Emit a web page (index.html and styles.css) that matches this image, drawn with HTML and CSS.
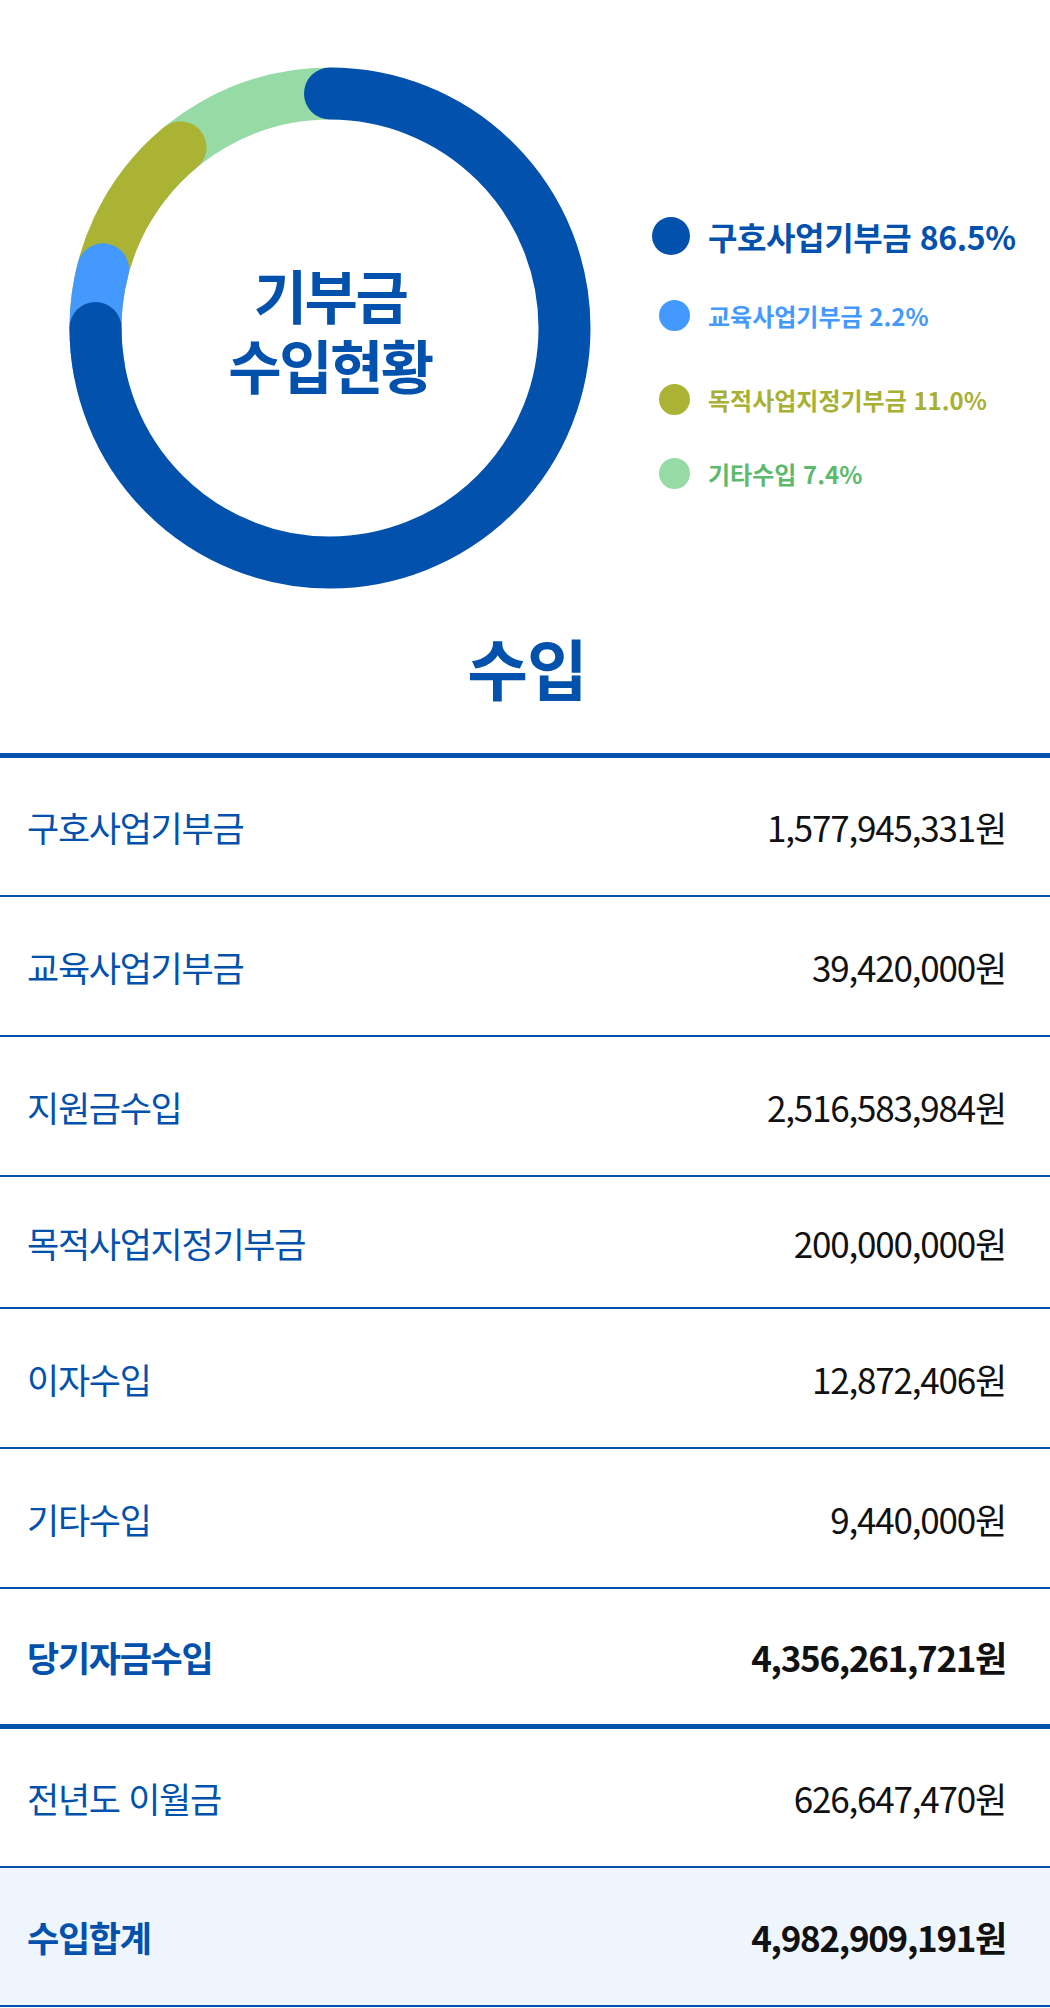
FILE: index.html
```html
<!DOCTYPE html>
<html lang="ko">
<head>
<meta charset="utf-8">
<title>기부금 수입현황</title>
<link rel="stylesheet" href="styles.css">
</head>
<body>
<section class="chart-section">
  <div class="donut">
    <svg class="donut-svg" viewBox="0 0 522 522" width="522" height="522">
      <path class="seg seg-green" d="M57.9 143.75 A234.5 234.5 0 0 1 261 26.5"/>
      <path class="seg seg-olive" d="M26.5 261 A234.5 234.5 0 0 1 111.5 80.3"/>
      <path class="seg seg-light" d="M30.1 301.7 A234.5 234.5 0 0 1 34.0 202.3"/>
      <path class="seg seg-dark" d="M261 26.5 A234.5 234.5 0 1 1 26.5 261"/>
    </svg>
    <div class="donut-label"><span class="donut-line">기부금</span><span class="donut-line">수입현황</span></div>
  </div>
  <ul class="legend">
    <li class="legend-item legend-main"><span class="dot-slot"><span class="dot dot-big dot-dark"></span></span><span class="legend-text text-dark">구호사업기부금 86.5%</span></li>
    <li class="legend-item legend-2"><span class="dot-slot"><span class="dot dot-light"></span></span><span class="legend-text text-light">교육사업기부금 2.2%</span></li>
    <li class="legend-item legend-3"><span class="dot-slot"><span class="dot dot-olive"></span></span><span class="legend-text text-olive">목적사업지정기부금 11.0%</span></li>
    <li class="legend-item legend-4"><span class="dot-slot"><span class="dot dot-green"></span></span><span class="legend-text text-green">기타수입 7.4%</span></li>
  </ul>
</section>
<h2 class="title">수입</h2>
<div class="table">
  <div class="row row-first"><span class="label">구호사업기부금</span><span class="value">1,577,945,331원</span></div>
  <div class="row"><span class="label">교육사업기부금</span><span class="value">39,420,000원</span></div>
  <div class="row"><span class="label">지원금수입</span><span class="value">2,516,583,984원</span></div>
  <div class="row row-short"><span class="label">목적사업지정기부금</span><span class="value">200,000,000원</span></div>
  <div class="row"><span class="label">이자수입</span><span class="value">12,872,406원</span></div>
  <div class="row"><span class="label">기타수입</span><span class="value">9,440,000원</span></div>
  <div class="row row-sum"><span class="label label-bold">당기자금수입</span><span class="value value-bold">4,356,261,721원</span></div>
  <div class="row row-last"><span class="label">전년도 이월금</span><span class="value">626,647,470원</span></div>
  <div class="row row-last row-total"><span class="label label-bold">수입합계</span><span class="value value-bold">4,982,909,191원</span></div>
</div>
</body>
</html>
```

FILE: styles.css
```css
* { box-sizing: border-box; }
html, body { margin: 0; padding: 0; background: #fff; }
body {
  font-family: "Noto Sans CJK KR", "Noto Sans", sans-serif;
  color: #111;
  width: 1050px;
}

.chart-section {
  display: flex;
  align-items: flex-start;
  padding: 67px 0 0 69px;
  height: 589px;
}

.donut {
  display: grid;
  width: 522px;
  height: 522px;
  flex: none;
}
.donut-svg, .donut-label { grid-area: 1 / 1; }
.donut-svg { display: block; }
.seg {
  fill: none;
  stroke-width: 52;
  stroke-linecap: round;
}
.seg-dark { stroke: #0251ad; }
.seg-light { stroke: #4499ff; }
.seg-olive { stroke: #abb335; }
.seg-green { stroke: #96dba6; }

.donut-label {
  align-self: center;
  justify-self: center;
  display: flex;
  flex-direction: column;
  align-items: center;
  color: #0251ad;
  font-weight: 700;
  font-size: 58px;
  letter-spacing: -2.5px;
  padding-top: 2px;
}
.donut-line {
  display: block;
  line-height: 70px;
  height: 70px;
}

.legend {
  list-style: none;
  margin: 149px 0 0 61px;
  padding: 0;
  display: flex;
  flex-direction: column;
}
.legend-item {
  display: flex;
  align-items: center;
  height: 40px;
}
.legend-2 { margin-top: 39px; }
.legend-3 { margin-top: 44px; }
.legend-4 { margin-top: 34px; }
.dot-slot {
  width: 38px;
  display: flex;
  justify-content: flex-end;
  margin-right: 18px;
}
.dot {
  display: block;
  width: 31px;
  height: 31px;
  border-radius: 50%;
}
.dot-big { width: 38px; height: 38px; }
.dot-dark { background: #0251ad; }
.dot-light { background: #4499ff; }
.dot-olive { background: #abb335; }
.dot-green { background: #96dba6; }

.legend-text {
  font-weight: 700;
  font-size: 24px;
  letter-spacing: 0;
  white-space: nowrap;
}
.legend-main .legend-text { font-size: 32px; letter-spacing: -0.4px; }
.text-dark { color: #0251ad; }
.text-light { color: #4499ff; }
.text-olive { color: #a8b033; }
.text-green { color: #5cba6e; }

.title {
  margin: 0;
  height: 164px;
  display: flex;
  align-items: center;
  justify-content: center;
  color: #0251ad;
  font-weight: 700;
  font-size: 66px;
  letter-spacing: -1px;
  padding: 0 0 10px 4px;
}

.table {
  border-top: 5px solid #0251ad;
}
.row {
  display: flex;
  align-items: center;
  justify-content: space-between;
  height: 140px;
  padding: 0 44px 0 27px;
  border-bottom: 2px solid #0251ad;
}
.row-first { height: 139px; }
.row-short { height: 132px; }
.row-sum { height: 140px; border-bottom-width: 5px; }
.row-last { height: 139px; }
.row-total { background: #eff5fd; }

.label {
  color: #0251ad;
  font-size: 35px;
  letter-spacing: -1.3px;
  white-space: nowrap;
}
.value {
  color: #111;
  font-size: 35px;
  letter-spacing: -1.2px;
  white-space: nowrap;
}
.label-bold { font-weight: 700; }
.value-bold { font-weight: 700; letter-spacing: -1.3px; }
```
